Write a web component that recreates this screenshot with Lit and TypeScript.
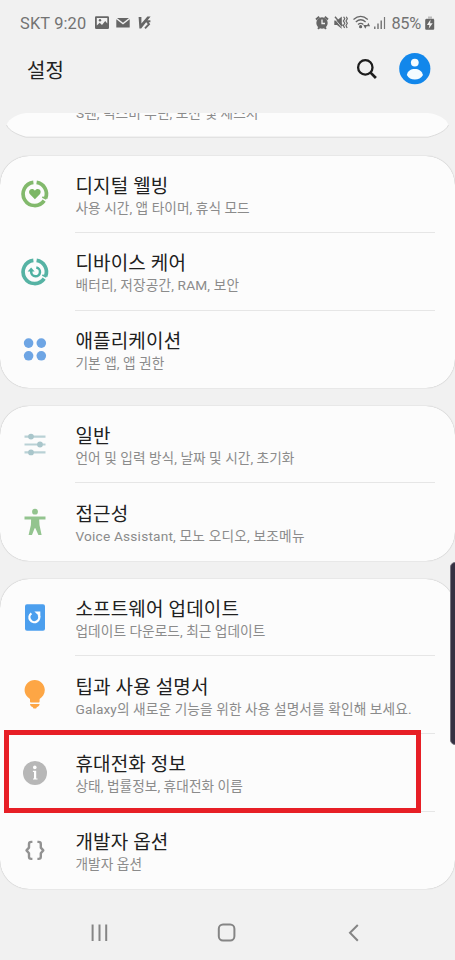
import { LitElement, html, svg, css, TemplateResult } from "lit";
import { customElement, property } from "lit/decorators.js";

interface Item {
  icon: string;
  title: string;
  note: string;
}

const groups: Item[][] = [
  [
    { icon: "wellbeing", title: "디지털 웰빙", note: "사용 시간, 앱 타이머, 휴식 모드" },
    { icon: "care", title: "디바이스 케어", note: "배터리, 저장공간, RAM, 보안" },
    { icon: "apps", title: "애플리케이션", note: "기본 앱, 앱 권한" },
  ],
  [
    { icon: "general", title: "일반", note: "언어 및 입력 방식, 날짜 및 시간, 초기화" },
    { icon: "access", title: "접근성", note: "Voice Assistant, 모노 오디오, 보조메뉴" },
  ],
  [
    { icon: "update", title: "소프트웨어 업데이트", note: "업데이트 다운로드, 최근 업데이트" },
    { icon: "tips", title: "팁과 사용 설명서", note: "Galaxy의 새로운 기능을 위한 사용 설명서를 확인해 보세요." },
    { icon: "info", title: "휴대전화 정보", note: "상태, 법률정보, 휴대전화 이름" },
    { icon: "dev", title: "개발자 옵션", note: "개발자 옵션" },
  ],
];

const ring = (color: string) => svg`
  <g fill="none" stroke=${color} stroke-width="3.7">
    <path d="M15.6 2.4A11.6 11.6 0 0 1 24.6 18.2"/>
    <path d="M23.2 20.6A11.6 11.6 0 1 1 12.4 2.4"/>
    <path d="M21.3 17L25.4 19" stroke-width="1.8"/>
  </g>`;

const glyphs: Record<string, TemplateResult> = {
  wellbeing: svg`${ring("#82b96c")}
    <path fill="#7cb765" d="M13.9 19.2L9 14.3C7.2 12.2 8.3 9.2 10.9 9.1C12.3 9.1 13.3 9.8 13.9 10.7C14.5 9.8 15.5 9.1 16.9 9.1C19.5 9.2 20.6 12.2 18.8 14.3Z"/>`,
  care: svg`${ring("#56b3a4")}
    <path fill="none" stroke="#4fb1a2" stroke-width="2.5" d="M15.3 9.6A4.4 4.4 0 1 1 10.2 14V13"/>
    <path fill="#4fb1a2" d="M6.6 13.6L10.1 9.4L13.6 13.6Z"/>`,
  apps: svg`<g fill="#6ea5e4">
    <circle cx="7.6" cy="8.1" r="4.8"/><circle cx="20.3" cy="8.1" r="4.8"/>
    <circle cx="7.6" cy="20.8" r="4.8"/><circle cx="20.3" cy="20.8" r="4.8"/></g>`,
  general: svg`<path stroke="#b9d1d5" stroke-width="2.1" d="M3.5 5.6H24.5M3.5 13.5H24.5M3.5 21.4H24.5"/>
    <g fill="#a9c6cb"><circle cx="10" cy="5.6" r="2.9"/><circle cx="19" cy="13.5" r="2.9"/><circle cx="10" cy="21.4" r="2.9"/></g>`,
  access: svg`<g fill="#93c48f"><circle cx="14" cy="3.7" r="2.9"/>
    <path d="M3.5 8.4H24.5V11.4H18.2L18.5 17L20.6 27H17.4L14.4 20.2H13.6L11 27H7.6L9.9 17L10.1 11.4H3.5Z"/></g>`,
  update: svg`<rect x="4" y="0.2" width="20" height="26.6" rx="2" fill="#4c9fee"/>
    <path fill="none" stroke="#fff" stroke-width="2.3" d="M10.4 9.3A4.9 4.9 0 1 0 17.7 11"/>
    <path fill="#fff" d="M13.4 7.4H19.3V13.2Z"/>`,
  tips: svg`<path fill="#fda645" d="M13.8 -1C8 -1 3.6 3.5 3.6 9.1C3.6 13.2 6 16 9 18V20.2C9 21 9.4 21.5 10.2 21.5H17.4C18.2 21.5 18.6 21 18.6 20.2V18C21.6 16 23.8 13.2 23.8 9.1C23.8 3.5 19.4 -1 13.8 -1Z"/>
    <path fill="#fda645" d="M9 23H18.6C18.4 25 17.2 25.6 16 26L15.1 27.6H12.5L11.6 26C10.4 25.6 9.2 25 9 23Z"/>`,
  info: svg`<circle cx="14" cy="14" r="12" fill="#b7b7b7"/>
    <circle cx="13.8" cy="8.4" r="1.8" fill="#fff"/>
    <path fill="#fff" d="M11.9 11.7H15.2V19.4H16.5V20.6H12V19.4H13V13.1H11.9Z"/>`,
  dev: svg`<g fill="none" stroke="#929292" stroke-width="2.4" stroke-linejoin="round">
    <path d="M11.4 5.9H10.2Q8 5.9 8 8V11.6L5.5 14.4L8 17.2V20.8Q8 22.9 10.2 22.9H11.4"/>
    <path d="M16.4 5.9H17.6Q19.8 5.9 19.8 8V11.6L22.3 14.4L19.8 17.2V20.8Q19.8 22.9 17.6 22.9H16.4"/></g>`,
};

@customElement("status-bar")
class StatusBar extends LitElement {
  static styles = css`
    :host { display: flex; height: 46px; padding: 1px 20px 0; box-sizing: border-box; align-items: center; justify-content: space-between;
      font: 16.4px/20px Roboto, sans-serif; color: #737373; }
    .side { display: flex; align-items: center; }
    .left { gap: 8px; }
    .carrier { width: 67px; white-space: nowrap; letter-spacing: 0.15px; }
    .pct { width: 30px; margin: 0 3.5px 0 4.5px; font-size: 16.4px; letter-spacing: -0.35px; white-space: nowrap; }
    svg { display: block; flex: none; position: relative; top: -0.5px; }
  `;
  render() {
    return html`
      <div class="side left"><span class="carrier">SKT 9:20</span>
        <svg width="56" height="14" viewBox="95 16 56 14">
          <path fill="#666" fill-rule="evenodd" d="M96 16.2H107.8Q109 16.2 109 17.4V27.8Q109 29 107.8 29H96.2Q95 29 95 27.8V17.4Q95 16.2 96 16.2ZM96.8 18V25.4L99.7 22.8L102 25L105.2 21L107.3 23.5V18Z"/>
          <circle cx="100" cy="20.3" r="1.2" fill="#666"/>
          <path fill="#666" d="M117 18H129L123 22.7ZM116.3 19.2L123 24.5L129.7 19.2V27.6H116.3Z"/>
          <path fill="#666" d="M138.6 17H141.4V23.6L147.4 16.6H150.6L141.2 28.4H139.4Z"/>
          <path fill="none" stroke="#666" stroke-width="1.9" d="M150.4 21.2H146.6L149 24.2L145 28.4"/>
        </svg>
      </div>
      <div class="side">
        <svg width="72" height="16" viewBox="315 15 72 16">
          <g fill="none" stroke="#666" stroke-width="2">
            <path d="M316 19.5L319.2 16.7M328 19.5L324.8 16.7M318 28.9L319.4 27.3M326 28.9L324.6 27.3"/></g>
          <circle cx="322" cy="23" r="5.7" fill="#666"/>
          <path fill="none" stroke="#f1f1f1" stroke-width="1.3" d="M322 19.5V23.5H325"/>
          <path fill="#666" d="M334.3 20.5H337L341.8 16.5V28.8L337 25H334.3Z"/>
          <path stroke="#f1f1f1" stroke-width="0.8" d="M334.1 18.2L343 28.8"/>
          <path stroke="#666" stroke-width="1.4" d="M335 16.8L342.5 25.8"/>
          <path fill="none" stroke="#666" stroke-width="1.2" d="M343.6 16.8L344.8 18.8L343.4 21L344.8 23.3L343.4 25.5L344.6 28M346.3 16.8L347.3 18.8L346 21L347.3 23.3L346 25.5L347.1 28"/>
          <g fill="none" stroke="#666" stroke-width="1.3">
            <path d="M353.5 19.5Q360.7 13.3 367.8 19.5M355.8 22Q360.7 17.6 365.6 22M358 24.5Q360.7 22.2 363.4 24.5"/></g>
          <circle cx="360.6" cy="26.7" r="1.6" fill="#666"/>
          <path fill="#666" d="M363.3 25H367.3L365.3 28.8ZM366.8 26.3L368.3 22.7L370.1 26.3Z"/>
          <path stroke="#666" stroke-width="1.3" d="M374.8 26.5V29M378 23.5V29M381.2 20.5V29"/>
          <path stroke="#777" stroke-width="1.2" d="M384.5 17V29"/>
        </svg>
        <span class="pct">85%</span>
        <svg width="10" height="14" viewBox="425 15.5 10 14">
          <path fill="#bbb" d="M428 16H432V18H434V19H426V18H428Z"/>
          <rect x="425.2" y="18.5" width="9" height="10.8" rx="1" fill="#666"/>
          <path fill="#f1f1f1" d="M430.6 19L426.9 24.4H429.4L428.7 28.3L432.7 22.8H430.1Z"/>
        </svg>
      </div>`;
  }
}

@customElement("title-bar")
class TitleBar extends LitElement {
  static styles = css`
    :host { display: flex; height: 67px; padding: 0 24px 0 27px; box-sizing: border-box; align-items: flex-start; }
    .name { flex: 1; margin: 10px 0 0; font: 400 20px/30px Roboto, "Noto Sans CJK KR", sans-serif; color: #222; }
    .search { margin: 12px 21px 0 0; }
    .user { margin-top: 7px; }
    svg { display: block; }
  `;
  render() {
    return html`
      <h1 class="name">설정</h1>
      <svg class="search" width="22" height="22" viewBox="0 0 22 22" fill="none" stroke="#1d1d1d">
        <circle cx="9.3" cy="9.4" r="7.2" stroke-width="2.3"/><path stroke-width="2.7" d="M14.3 14.4L19.9 20"/>
      </svg>
      <svg class="user" width="32" height="32" viewBox="0 0 32 32">
        <circle cx="15.8" cy="15.7" r="15.6" fill="#1287eb"/>
        <circle cx="15.8" cy="9.6" r="3.9" fill="#f4fcff"/>
        <path fill="#f4fcff" d="M7.8 22.1C8.8 17.6 11.8 15.9 15.8 15.9S22.8 17.6 24 22.1C22.3 25.2 19.3 26.6 15.8 26.6S9.5 25.2 7.8 22.1Z"/>
      </svg>`;
  }
}

@customElement("settings-row")
class SettingsRow extends LitElement {
  @property({ attribute: false }) item!: Item;
  static styles = css`
    :host { display: flex; flex: 1; align-items: center; padding-left: 21.2px; font-family: Roboto, "Noto Sans CJK KR", sans-serif; }
    .icon { width: 28px; height: 28px; margin-right: 26.3px; overflow: visible; flex: none; }
    .text { flex: 1; align-self: stretch; margin-right: 20px; padding-top: 18.3px; box-sizing: border-box; white-space: nowrap; }
    :host(.ruled) .text { border-bottom: 1px solid #e6e6e6; }
    .title { font-size: 19px; line-height: 25px; letter-spacing: 0.15px; color: #202020; }
    .note { font-size: 13.7px; line-height: 19px; letter-spacing: 0.04px; color: #8b8b8b; }
    .access { letter-spacing: 0.19px; }
    .care { letter-spacing: 0.16px; }
    .tips { letter-spacing: 0.1px; }
  `;
  render() {
    return html`<svg class="icon" viewBox="0 0 28 28">${glyphs[this.item.icon]}</svg>
      <div class="text"><div class="title">${this.item.title}</div><div class="note ${this.item.icon}">${this.item.note}</div></div>`;
  }
}

@customElement("app-root")
class AppRoot extends LitElement {
  static styles = css`
    :host { display: flex; flex-direction: column; position: relative; width: 455px; height: 960px; overflow: hidden; background: #f1f1f1; }
    .partial { position: relative; height: 25px; margin-bottom: 17.5px; overflow: hidden; }
    .partial svg { display: block; }
    .cut { position: absolute; left: 76px; top: -9.5px; font: 13.7px/19px Roboto, "Noto Sans CJK KR", sans-serif; letter-spacing: 0.04px; color: #8b8b8b; white-space: nowrap; }
    .card { display: flex; flex-direction: column; margin-bottom: 17.7px; background: #fcfcfc; border-radius: 29px;
      box-shadow: 0 0 1px rgba(0, 0, 0, 0.35); }
    .n3 { height: 232.8px; }
    .n2 { height: 155px; }
    .n4 { height: 310.6px; margin-bottom: 0; }
    .nav { flex: 1; display: flex; align-items: center; justify-content: space-between; padding: 16px 95px 0 91px; }
    .nav svg { display: block; }
    .home { margin-right: 4px; }
    .highlight { position: absolute; left: 4px; top: 730px; width: 417px; height: 83px; box-sizing: border-box; border: 5px solid #e71f26; }
    .edge { position: absolute; left: 450px; top: 562px; width: 10px; height: 183px; border-radius: 5px; background: #353142; box-sizing: border-box; border: 1px solid #77747f; }
  `;
  render() {
    return html`
      <status-bar></status-bar>
      <title-bar></title-bar>
      <div class="partial">
        <svg width="455" height="25" viewBox="0 0 455 25">
          <path fill="#fcfcfc" d="M26 0C18 1 9 5 6.5 12C9 18 18 22 26 24.2H428C437 22 446 18 448.5 12C446 5 437 1 428 0Z"/>
          <path fill="none" stroke="#d4d4d4" stroke-width="0.8" d="M6.5 12C9 18 18 22 26 24.2H428C437 22 446 18 448.5 12"/>
        </svg>
        <div class="cut">S펜, 빅스비 루틴, 모션 및 제스처</div>
      </div>
      ${groups.map((g) => html`<div class="card n${g.length}">
        ${g.map((item, i) => html`<settings-row class=${i < g.length - 1 ? "ruled" : ""} .item=${item}></settings-row>`)}
      </div>`)}
      <div class="nav">
        <svg width="17" height="18" viewBox="0 0 17 18"><path stroke="#858585" stroke-width="2" d="M1.6 0.5V17M8.5 0.5V17M15.2 0.5V17"/></svg>
        <svg class="home" width="19" height="19" viewBox="0 0 19 19"><rect x="1.8" y="1.6" width="15.6" height="15.8" rx="4.2" fill="none" stroke="#858585" stroke-width="2"/></svg>
        <svg width="12" height="18" viewBox="0 0 12 18"><path fill="none" stroke="#858585" stroke-width="2" d="M9.8 1L2 8.8L9.8 16.8"/></svg>
      </div>
      <div class="highlight"></div>
      <div class="edge"></div>`;
  }
}
